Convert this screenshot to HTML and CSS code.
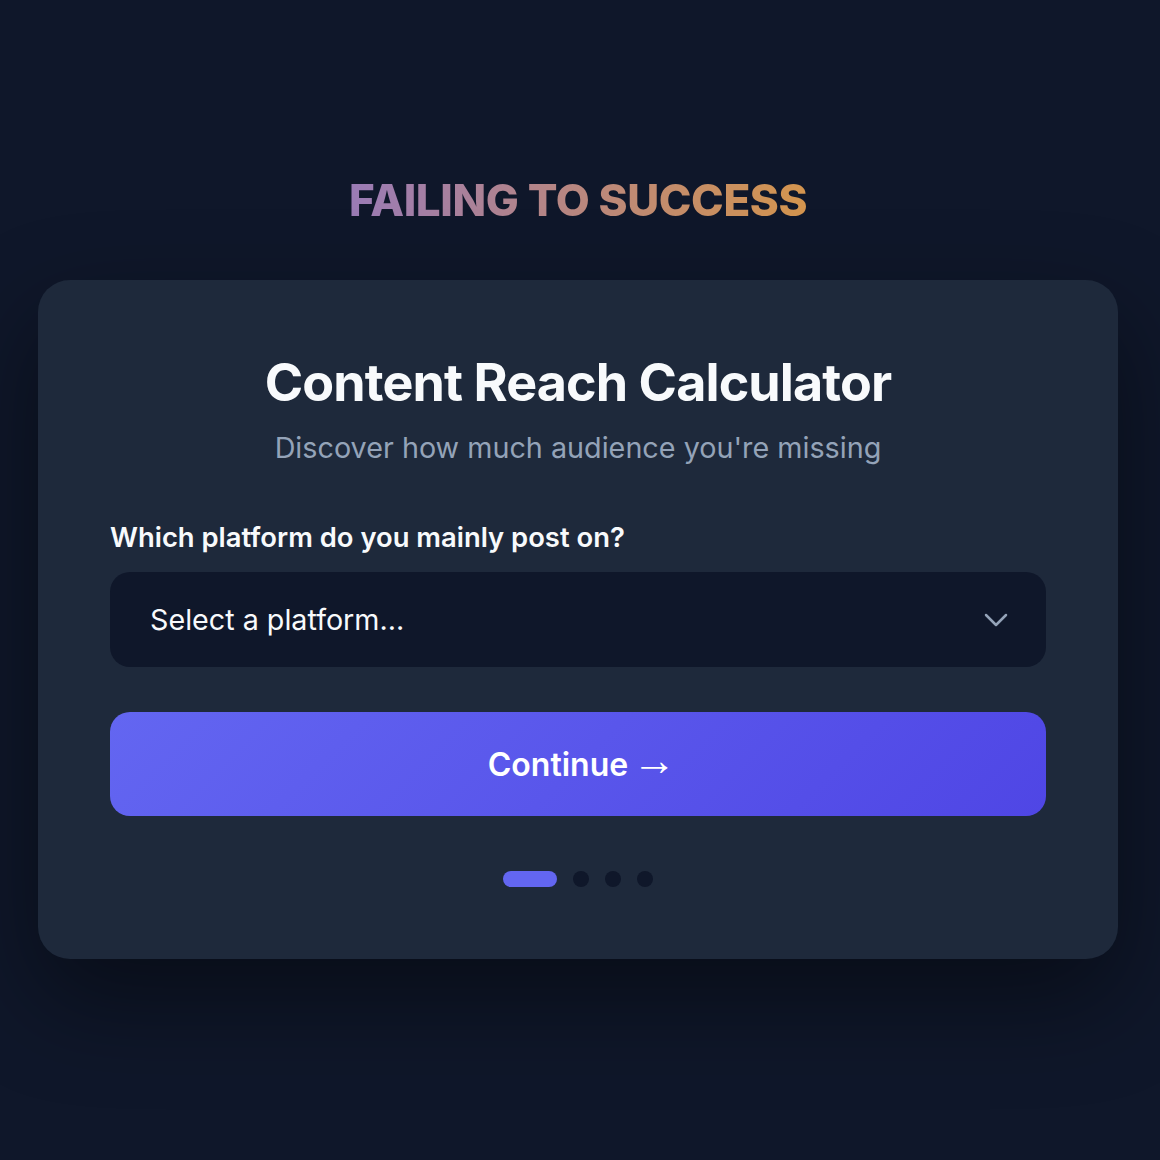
FILE: index.html
```html
<!DOCTYPE html>
<html lang="en">
<head>
<meta charset="utf-8">
<title>Content Reach Calculator</title>
<link rel="stylesheet" href="styles.css">
</head>
<body>
<main class="page">
  <h1 class="brand">FAILING TO SUCCESS</h1>
  <section class="card">
    <h2 class="card-title">Content Reach Calculator</h2>
    <p class="card-sub">Discover how much audience you're missing</p>
    <label class="field-label">Which platform do you mainly post on?</label>
    <div class="select">
      <span class="select-text">Select a platform...</span>
      <svg class="chev" width="30" height="30" viewBox="0 0 24 24" fill="none" stroke="#94a3b8" stroke-width="2" stroke-linecap="round" stroke-linejoin="round"><path d="M4 8l8 8 8-8"/></svg>
    </div>
    <button class="btn">Continue <span class="arrow">→</span></button>
    <div class="dots">
      <span class="dot active"></span>
      <span class="dot"></span>
      <span class="dot"></span>
      <span class="dot"></span>
    </div>
  </section>
</main>
</body>
</html>
```
FILE: styles.css
```css
* { box-sizing: border-box; }
html, body { margin: 0; padding: 0; }
body {
  background: #0f172a;
  font-family: Inter, "Noto Sans", sans-serif;
  color: #f8fafc;
  min-height: 1160px;
}
.page {
  padding: 172px 42px 0 38px;
  display: flex;
  flex-direction: column;
  align-items: center;
}
.brand {
  margin: 0 0 52px;
  font-size: 44px;
  line-height: 56px;
  font-weight: 800;
  letter-spacing: -0.4px;
  background: linear-gradient(90deg, #9a7bb6 0%, #b9877f 50%, #d4954e 100%);
  -webkit-background-clip: text;
  background-clip: text;
  color: transparent;
}
.card {
  width: 1080px;
  background: #1e293b;
  border-radius: 32px;
  padding: 72px;
  box-shadow: 0 40px 100px rgba(0, 0, 0, 0.45);
  display: flex;
  flex-direction: column;
}
.card-title {
  margin: 0;
  text-align: center;
  font-size: 52px;
  line-height: 62px;
  font-weight: 700;
  letter-spacing: -0.9px;
  color: #f8fafc;
}
.card-sub {
  margin: 14px 0 0;
  text-align: center;
  font-size: 28.75px;
  line-height: 40px;
  color: #94a3b8;
}
.field-label {
  margin-top: 51px;
  font-size: 27.4px;
  line-height: 36px;
  font-weight: 600;
  color: #f8fafc;
}
.select {
  margin-top: 17px;
  height: 95px;
  background: #0f172a;
  border-radius: 20px;
  padding: 0 35px 0 40px;
  display: flex;
  align-items: center;
  justify-content: space-between;
}
.select-text {
  font-size: 28.7px;
  color: #f8fafc;
}
.btn {
  margin-top: 45px;
  height: 104px;
  padding: 0 0 0 8px;
  border: none;
  border-radius: 20px;
  background: linear-gradient(135deg, #6366f1 0%, #4f46e5 100%);
  color: #ffffff;
  font-family: Inter, "Noto Sans", sans-serif;
  font-size: 32px;
  font-weight: 600;
}
.arrow {
  font-family: "Liberation Sans", sans-serif;
  font-size: 44px;
  font-weight: 400;
  line-height: 0;
  vertical-align: 1px;
  margin-left: -4px;
}
.dots {
  margin-top: 55px;
  display: flex;
  justify-content: center;
  gap: 16px;
}
.dot {
  width: 16px;
  height: 16px;
  border-radius: 8px;
  background: #0f172a;
}
.dot.active {
  width: 54px;
  background: #6366f1;
}
```
